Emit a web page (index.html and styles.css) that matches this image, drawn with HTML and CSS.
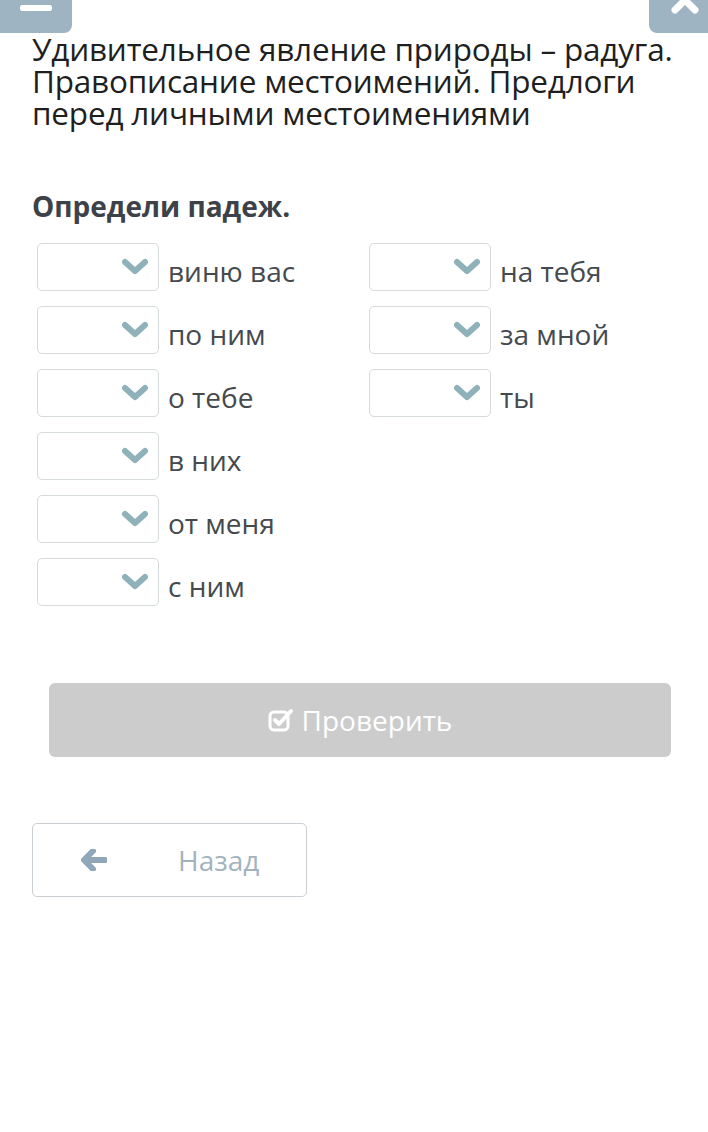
FILE: index.html
```html
<!DOCTYPE html>
<html lang="ru">
<head>
    <meta charset="UTF-8">
    <meta name="viewport" content="width=device-width, initial-scale=1.0">
    <title>Определи падеж</title>
    <link rel="stylesheet" href="styles.css">
</head>
<body>

<div class="topbar">
    <button class="top-btn menu" aria-label="Меню">
        <svg width="32" height="30" viewBox="0 0 32 30">
            <rect x="0" y="-14" width="32" height="6" rx="2" fill="#fff"/>
            <rect x="0" y="4" width="32" height="6" rx="2" fill="#fff"/>
        </svg>
    </button>
    <button class="top-btn close" aria-label="Закрыть">
        <svg width="28" height="16" viewBox="0 0 28 16">
            <path d="M4 -10 L24 10 M24 -10 L4 10" stroke="#fff" stroke-width="7" stroke-linecap="round"/>
        </svg>
    </button>
</div>

<div class="page">
    <h1>Удивительное явление природы – радуга. Правописание местоимений. Предлоги перед личными местоимениями</h1>

    <h2>Определи падеж.</h2>

    <div class="grid">
        <div class="col">
            <div class="item"><span class="select"></span><span class="word">виню вас</span></div>
            <div class="item"><span class="select"></span><span class="word">по ним</span></div>
            <div class="item"><span class="select"></span><span class="word">о тебе</span></div>
            <div class="item"><span class="select"></span><span class="word">в них</span></div>
            <div class="item"><span class="select"></span><span class="word">от меня</span></div>
            <div class="item"><span class="select"></span><span class="word">с ним</span></div>
        </div>
        <div class="col">
            <div class="item"><span class="select"></span><span class="word">на тебя</span></div>
            <div class="item"><span class="select"></span><span class="word">за мной</span></div>
            <div class="item"><span class="select"></span><span class="word">ты</span></div>
        </div>
    </div>

    <button class="check">
        <svg width="26" height="24" viewBox="0 0 26 24">
            <rect x="2" y="4" width="18" height="18" rx="4" fill="none" stroke="#fff" stroke-width="3"/>
            <path d="M7 12 L11 16 L23 3" fill="none" stroke="#fff" stroke-width="4" stroke-linecap="round" stroke-linejoin="round"/>
        </svg>
        Проверить
    </button>

    <button class="back">
        <svg width="26" height="22" viewBox="0 0 26 22">
            <path d="M12 2 L3 11 L12 20 M4 11 L24 11" fill="none" stroke="#8fa7b8" stroke-width="6" stroke-linecap="round" stroke-linejoin="round"/>
        </svg>
        <span>Назад</span>
    </button>
</div>

<script>
    // стрелка в каждом выпадающем списке
    document.querySelectorAll('.select').forEach(function (box) {
        box.innerHTML = '<svg width="28" height="18" viewBox="0 0 28 18">' +
            '<path d="M4 4 L14 13 L24 4" fill="none" stroke="#8fb2ba" stroke-width="6" stroke-linecap="round" stroke-linejoin="round"/>' +
            '</svg>';
    });
</script>

</body>
</html>
```

FILE: styles.css
```css
body {
    margin: 0;
    font-family: "Open Sans", Arial, sans-serif;
    background: #fff;
}
.topbar {
    display: flex;
    justify-content: space-between;
    height: 33px;
}
.top-btn {
    border: none;
    background: #9fb4c3;
    padding: 0;
    height: 33px;
    display: flex;
    justify-content: center;
    align-items: flex-start;
    overflow: hidden;
}
.top-btn.menu {
    width: 72px;
    border-radius: 0 0 8px 0;
}
.top-btn.close {
    width: 59px;
    border-radius: 0 0 0 8px;
    justify-content: flex-start;
    padding-left: 22px;
}
.top-btn.menu svg {
    margin-top: 1px;
}
.page {
    padding: 0 30px 0 32px;
}
h1 {
    margin: 0;
    font-size: 31.5px;
    line-height: 32px;
    font-weight: 400;
    color: #1f1f1f;
    letter-spacing: -0.2px;
}
h2 {
    margin: 59px 0 19px;
    font-size: 28px;
    line-height: 36px;
    font-weight: 700;
    color: #3d4249;
}
.grid {
    display: grid;
    grid-template-columns: 332px 1fr;
    padding-left: 5px;
}
.col {
    display: flex;
    flex-direction: column;
    gap: 15px;
}
.item {
    display: flex;
    align-items: center;
    height: 48px;
}
.select {
    box-sizing: border-box;
    width: 122px;
    height: 48px;
    border: 1px solid #d5dadc;
    border-radius: 5px;
    display: flex;
    justify-content: flex-end;
    align-items: center;
    padding-right: 9px;
    margin-right: 9px;
}
.word {
    font-size: 28px;
    color: #454a4f;
    padding-top: 8px;
}
.check {
    display: flex;
    justify-content: center;
    align-items: center;
    gap: 8px;
    width: 622px;
    height: 74px;
    margin: 77px 0 0 17px;
    border: none;
    border-radius: 6px;
    background: #cccccc;
    color: #fff;
    font-family: inherit;
    font-size: 28px;
}
.back {
    display: flex;
    align-items: center;
    box-sizing: border-box;
    width: 275px;
    height: 74px;
    margin-top: 66px;
    padding: 0 0 0 48px;
    border: 1px solid #c9cfd2;
    border-radius: 5px;
    background: #fff;
    font-family: inherit;
    font-size: 28px;
    color: #a3b3bd;
}
.back span {
    margin-left: 71px;
}
```
